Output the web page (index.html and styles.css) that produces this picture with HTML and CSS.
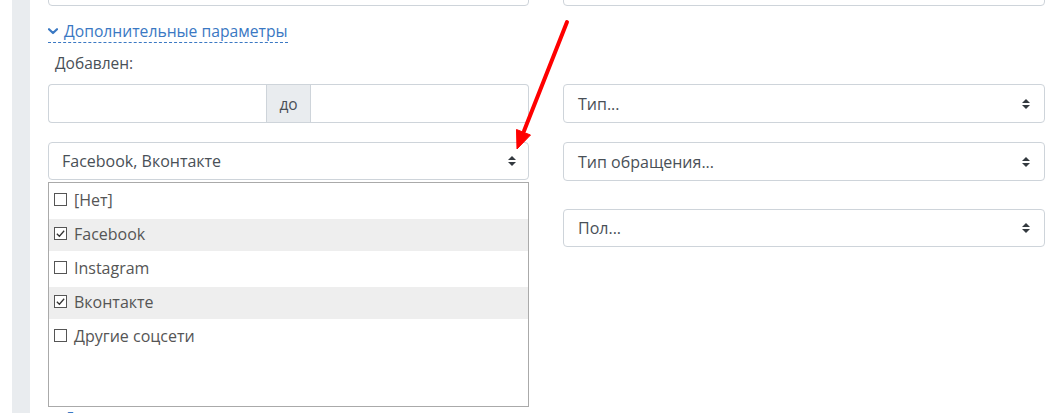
FILE: index.html
```html
<!DOCTYPE html>
<html lang="ru">
<head>
<meta charset="utf-8">
<title>Фильтр</title>
<link rel="stylesheet" href="styles.css">
</head>
<body>
<div class="page">
  <aside class="rail"></aside>
  <main class="form">
    <div class="col">
      <input class="field clip" type="text">
      <a class="toggle" href="#">
        <svg class="chev" viewBox="0 0 10 7" width="10" height="7"><path d="M1 1.2 5 5 9 1.2" fill="none" stroke="currentColor" stroke-width="2.2" stroke-linecap="round" stroke-linejoin="round"/></svg>
        <span class="toggle-text">Дополнительные параметры</span>
      </a>
      <div class="label">Добавлен:</div>
      <div class="range">
        <input class="range-input" type="text">
        <span class="addon">до</span>
        <input class="range-input" type="text">
      </div>
      <div class="select">
        <span>Facebook, Вконтакте</span>
        <svg class="updown" viewBox="0 0 8 10" width="8" height="10"><path d="M4 0 0 4h8zM4 10 0 6h8z" fill="#343a40"/></svg>
      </div>
      <ul class="listbox">
        <li class="opt"><span class="box"></span>[Нет]</li>
        <li class="opt on"><span class="box"><svg viewBox="0 0 12 12" width="11" height="11"><path d="M2 6.2 4.8 9 10 3" fill="none" stroke="#333" stroke-width="1.4"/></svg></span>Facebook</li>
        <li class="opt"><span class="box"></span>Instagram</li>
        <li class="opt on"><span class="box"><svg viewBox="0 0 12 12" width="11" height="11"><path d="M2 6.2 4.8 9 10 3" fill="none" stroke="#333" stroke-width="1.4"/></svg></span>Вконтакте</li>
        <li class="opt"><span class="box"></span>Другие соцсети</li>
      </ul>
      <a class="toggle next" href="#">
        <svg class="chev" viewBox="0 0 10 7" width="10" height="7"><path d="M1 1.2 5 5 9 1.2" fill="none" stroke="currentColor" stroke-width="2.2" stroke-linecap="round" stroke-linejoin="round"/></svg>
        <span class="toggle-text">Дополнительно</span>
      </a>
    </div>
    <div class="col">
      <input class="field clip" type="text">
      <div class="select s-type">
        <span>Тип...</span>
        <svg class="updown" viewBox="0 0 8 10" width="8" height="10"><path d="M4 0 0 4h8zM4 10 0 6h8z" fill="#343a40"/></svg>
      </div>
      <div class="select s-kind">
        <span>Тип обращения...</span>
        <svg class="updown" viewBox="0 0 8 10" width="8" height="10"><path d="M4 0 0 4h8zM4 10 0 6h8z" fill="#343a40"/></svg>
      </div>
      <div class="select s-sex">
        <span>Пол...</span>
        <svg class="updown" viewBox="0 0 8 10" width="8" height="10"><path d="M4 0 0 4h8zM4 10 0 6h8z" fill="#343a40"/></svg>
      </div>
    </div>
  </main>
  <!-- annotation arrow drawn over the form -->
  <svg class="pointer" viewBox="0 0 1059 413" width="1059" height="413">
    <line x1="567" y1="22" x2="524" y2="131" stroke="#f00" stroke-width="4" stroke-linecap="round"/>
    <path d="M517 149 516.5 129.5 530.5 135z" fill="#f00" stroke="#f00" stroke-width="1" stroke-linejoin="round"/>
  </svg>
</div>
</body>
</html>
```

FILE: styles.css
```css
* { box-sizing: border-box; }

html, body {
  margin: 0;
  padding: 0;
  background: #fff;
  overflow: hidden;
}

body {
  font-family: "Open Sans", "Liberation Sans", sans-serif;
  font-size: 16px;
  color: #495057;
}

.page {
  position: relative;
  width: 1059px;
  height: 413px;
  display: flex;
  padding-left: 12px;
  overflow: hidden;
}

.rail {
  width: 18px;
  flex: none;
  background: #e9ecef;
}

.form {
  margin-left: 18px;
  display: grid;
  grid-template-columns: 481px 482px;
  column-gap: 34px;
  align-items: start;
}

.col {
  display: flex;
  flex-direction: column;
  align-items: stretch;
}

.field {
  height: 38px;
  border: 1px solid #ced4da;
  border-radius: 4px;
  background: #fff;
  font: inherit;
  padding: 0 12px;
}

.clip { margin-top: -32px; }

.toggle {
  align-self: flex-start;
  display: inline-flex;
  align-items: center;
  gap: 6px;
  margin-top: 14px;
  height: 23px;
  color: #3a78c3;
  font-size: 15.7px;
  text-decoration: none;
  border-bottom: 1px dashed #3a78c3;
  line-height: 22px;
}

.chev { color: #3a78c3; margin-top: 1px; }

.label {
  margin-top: 8px;
  padding-left: 7px;
  line-height: 24px;
  font-size: 15.5px;
  color: #495057;
}

.range {
  margin-top: 9px;
  height: 39px;
  display: flex;
}

.range-input {
  flex: 1;
  min-width: 0;
  border: 1px solid #ced4da;
  background: #fff;
  font: inherit;
}
.range-input:first-child { border-radius: 4px 0 0 4px; border-right: 0; }
.range-input:last-child { border-radius: 0 4px 4px 0; border-left: 0; }

.addon {
  width: 45px;
  flex: none;
  display: flex;
  align-items: center;
  justify-content: center;
  background: #e9ecef;
  border: 1px solid #ced4da;
  font-size: 15.5px;
  color: #495057;
}

.select {
  height: 38px;
  margin-top: 19px;
  display: flex;
  align-items: center;
  justify-content: space-between;
  padding: 0 12px 0 13px;
  border: 1px solid #ced4da;
  border-radius: 4px;
  background: #fff;
  font-size: 16px;
  color: #495057;
}

.s-type { margin-top: 78px; height: 39px; }
.s-kind { margin-top: 19px; height: 39px; }
.s-sex { margin-top: 28px; }

.s-type, .s-kind, .s-sex { padding-left: 14px; padding-right: 14px; }

.updown { flex: none; }

.listbox {
  list-style: none;
  margin: 2px 0 0;
  padding: 2px 0 0;
  height: 225px;
  border: 1px solid #aaa;
  background: #fff;
}

.opt {
  height: 32px;
  margin-bottom: 2px;
  display: flex;
  align-items: center;
  gap: 7px;
  padding-left: 5px;
  padding-bottom: 3px;
  font-size: 16px;
  color: #555;
}

.opt.on { background: #eee; }

.box {
  width: 13px;
  height: 13px;
  flex: none;
  border: 1px solid #555;
  background: #fff;
  display: flex;
  align-items: center;
  justify-content: center;
}

.next { margin-top: 0; }

.pointer {
  position: absolute;
  left: 0;
  top: 0;
  pointer-events: none;
}
```
